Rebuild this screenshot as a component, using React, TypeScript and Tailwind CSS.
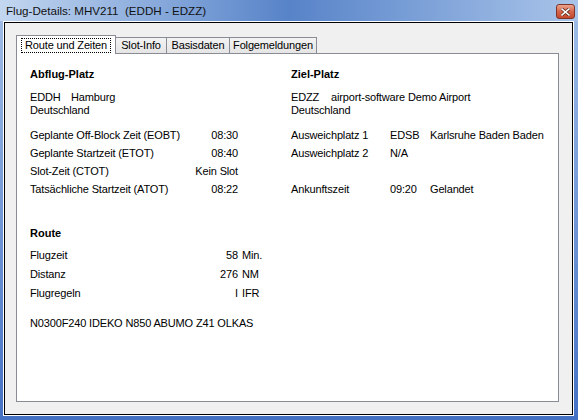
const font = "font-['Liberation_Sans',Arial,sans-serif]";

function Row({ label, value }: { label: string; value: string }) {
  return (
    <div className="flex h-[18px] w-[208px] items-center justify-between">
      <span>{label}</span>
      <span>{value}</span>
    </div>
  );
}

function RouteRow({ label, num, unit }: { label: string; num: string; unit: string }) {
  return (
    <div className="flex h-[19px] items-center">
      <span className="w-[176px]">{label}</span>
      <span className="w-[32px] text-right">{num}</span>
      <span className="ml-[4px]">{unit}</span>
    </div>
  );
}

function AltRow({ label, code, name }: { label: string; code: string; name: string }) {
  return (
    <div className="flex h-[18px] items-center">
      <span className="w-[99px]">{label}</span>
      <span className="w-[40px]">{code}</span>
      <span>{name}</span>
    </div>
  );
}

export default function App() {
  return (
    <div
      className={`flex h-[420px] w-[578px] flex-col bg-gradient-to-b from-[#a3bfe7] to-[#4571c3] ${font} text-[11px] tracking-[-0.15px] text-black`}
    >
      {/* title bar */}
      <div className="flex h-[21px] items-center justify-between bg-gradient-to-r from-[#c3d7f0] via-[#5783c8] to-[#a9c4e9] pl-[6px] pr-[3px]">
        <span className="text-[11.6px] tracking-normal text-[#111]">Flug-Details: MHV211&nbsp; (EDDH - EDZZ)</span>
        <div className="mt-[2px] flex h-[15px] w-[19px] items-center justify-center rounded-[3px] border border-[#7e3426] bg-gradient-to-b from-[#eba58f] via-[#d5654a] to-[#c4472c]">
          <svg width="9" height="8" viewBox="0 0 9 8">
            <path d="M1 1 L8 7 M8 1 L1 7" stroke="#5a2418" strokeWidth="3" strokeLinecap="square" />
            <path d="M1 1 L8 7 M8 1 L1 7" stroke="#fff" strokeWidth="1.6" strokeLinecap="square" />
          </svg>
        </div>
      </div>

      {/* client area */}
      <div className="mb-[5px] ml-[4px] mr-[5px] mt-[1px] flex flex-1 flex-col border border-black bg-[#f0f0f0] pb-[12px] pl-[11px] pr-[13px] shadow-[0_0_0_1px_#ffffff]">
        {/* tabs */}
        <div className="flex h-[30px] items-end">
          <div className="relative z-10 -mb-px flex h-[19px] w-[100px] items-center justify-center border border-b-0 border-[#898c95] bg-white">
            <span className="border border-dotted border-black px-[3px] leading-[13px]">Route und Zeiten</span>
          </div>
          <div className="flex h-[16px] w-[51px] items-center justify-center border-r border-t border-[#898c95] bg-gradient-to-b from-[#f3f3f3] to-[#e5e5e5]">
            Slot-Info
          </div>
          <div className="flex h-[16px] w-[63px] items-center justify-center border-r border-t border-[#898c95] bg-gradient-to-b from-[#f3f3f3] to-[#e5e5e5]">
            Basisdaten
          </div>
          <div className="flex h-[16px] w-[87px] items-center justify-center border-r border-t border-[#898c95] bg-gradient-to-b from-[#f3f3f3] to-[#e5e5e5]">
            Folgemeldungen
          </div>
        </div>

        {/* panel */}
        <div className="flex-1 border border-[#898c95] bg-white pl-[13px] pt-[14px] leading-[13px]">
          <div className="flex">
            {/* Abflug */}
            <div className="w-[261px]">
              <div className="h-[13px] font-bold tracking-normal">Abflug-Platz</div>
              <div className="mt-[10px]">
                <div className="flex">
                  <span className="w-[41px]">EDDH</span>
                  <span>Hamburg</span>
                </div>
                <div>Deutschland</div>
              </div>
              <div className="mt-[9px]">
                <Row label="Geplante Off-Block Zeit (EOBT)" value="08:30" />
                <Row label="Geplante Startzeit (ETOT)" value="08:40" />
                <Row label="Slot-Zeit (CTOT)" value="Kein Slot" />
                <Row label="Tatsächliche Startzeit (ATOT)" value="08:22" />
              </div>
            </div>

            {/* Ziel */}
            <div>
              <div className="h-[13px] font-bold tracking-normal">Ziel-Platz</div>
              <div className="mt-[10px]">
                <div className="flex">
                  <span className="w-[40px]">EDZZ</span>
                  <span>airport-software Demo Airport</span>
                </div>
                <div>Deutschland</div>
              </div>
              <div className="mt-[9px]">
                <AltRow label="Ausweichplatz 1" code="EDSB" name="Karlsruhe Baden Baden" />
                <AltRow label="Ausweichplatz 2" code="N/A" name="" />
                <div className="h-[18px]" />
                <AltRow label="Ankunftszeit" code="09:20" name="Gelandet" />
              </div>
            </div>
          </div>

          {/* Route */}
          <div className="mt-[29px] h-[13px] font-bold tracking-normal">Route</div>
          <div className="mt-[6px]">
            <RouteRow label="Flugzeit" num="58" unit="Min." />
            <RouteRow label="Distanz" num="276" unit="NM" />
            <RouteRow label="Flugregeln" num="I" unit="IFR" />
          </div>
          <div className="mt-[14px]">N0300F240 IDEKO N850 ABUMO Z41 OLKAS</div>
        </div>
      </div>
    </div>
  );
}
